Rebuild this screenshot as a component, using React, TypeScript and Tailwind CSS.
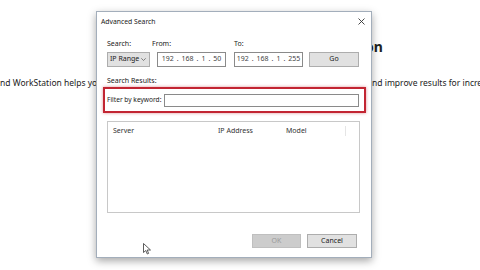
import React from "react";

const ff = { fontFamily: '"Noto Sans", "Open Sans", sans-serif' };

function IpBox({ parts }: { parts: string[] }) {
  return (
    <div className="w-[69px] h-[15px] border border-[#8a8a8a] bg-white flex items-center justify-center gap-[3px] text-[7px] text-[#444]">
      {parts.map((p, i) => (
        <React.Fragment key={i}>
          {i > 0 && <span>.</span>}
          <span>{p}</span>
        </React.Fragment>
      ))}
    </div>
  );
}

export default function App() {
  return (
    <div className="relative w-[480px] h-[270px] bg-white overflow-hidden" style={ff}>
      {/* background page */}
      <div className="pt-[38px] text-[#222]">
        <div className="pl-[365px] text-[14px] font-bold leading-[18px] whitespace-nowrap">on</div>
        <div className="mt-[21px] grid grid-cols-[372px_1fr] text-[8.5px] leading-[12px] whitespace-nowrap overflow-hidden">
          <span>nd WorkStation helps you</span>
          <span>nd improve results for increa</span>
        </div>
      </div>

      {/* dialog */}
      <div className="absolute left-[96px] top-[11px] w-[276px] h-[247px] bg-white border border-[#a3aebb] shadow-[0_3px_8px_rgba(0,0,0,0.35)] text-[#1a1a1a] text-[7px]">
        <div className="h-[19px] flex items-center justify-between pl-[4px] pr-[6px]">
          <span className="leading-[9px] text-[6.8px]">Advanced Search</span>
          <svg width="7" height="7" viewBox="0 0 7 7" className="mt-[-1px]">
            <path d="M0.5 0.5 L6.5 6.5 M6.5 0.5 L0.5 6.5" stroke="#333" strokeWidth="0.9" />
          </svg>
        </div>
        <div className="pl-[10px]">
          <div className="mt-[8px] flex leading-[9px]">
            <span className="w-[45px]">Search:</span>
            <span className="w-[82px]">From:</span>
            <span>To:</span>
          </div>
          <div className="mt-[4px] flex items-center">
            <div className="w-[43px] h-[15px] bg-[#e1e1e1] border border-[#adadad] flex items-center justify-between pl-[2px] pr-[3px]">
              <span>IP Range</span>
              <svg width="5" height="3" viewBox="0 0 5 3">
                <path d="M0.3 0.3 L2.5 2.5 L4.7 0.3" stroke="#555" strokeWidth="0.7" fill="none" />
              </svg>
            </div>
            <div className="ml-[7px]">
              <IpBox parts={["192", "168", "1", "50"]} />
            </div>
            <div className="ml-[8px]">
              <IpBox parts={["192", "168", "1", "255"]} />
            </div>
            <div className="ml-[6px] w-[50px] h-[15px] bg-[#e1e1e1] border border-[#adadad] flex items-center justify-center">
              Go
            </div>
          </div>
          <div className="mt-[9px] leading-[9px]">Search Results:</div>
          <div className="mt-[2px] ml-[-4px] w-[263px] h-[26px] border-2 border-[#c22532] shadow-[0_0_3px_rgba(194,37,50,0.5)] flex items-center pl-[2px]">
            <span className="w-[57px] whitespace-nowrap text-[6.6px]">Filter by keyword:</span>
            <div className="w-[195px] h-[13px] border border-[#8a8a8a] bg-white" />
          </div>
          <div className="mt-[8px] w-[253px] h-[92px] border border-[#c8c8c8] bg-white flex items-start pt-[4px] text-[#333]">
            <span className="pl-[5px] w-[110px]">Server</span>
            <span className="w-[68px]">IP Address</span>
            <span className="w-[60px] h-[10px] border-r border-[#e5e5e5]">Model</span>
          </div>
          <div className="mt-[21px] flex pl-[145px] gap-[6px]">
            <div className="w-[49px] h-[14px] bg-[#cccccc] border border-[#bfbfbf] flex items-center justify-center text-[#9a9a9a]">
              OK
            </div>
            <div className="w-[50px] h-[14px] bg-[#e1e1e1] border border-[#adadad] flex items-center justify-center">
              Cancel
            </div>
          </div>
        </div>
      </div>

      {/* mouse cursor */}
      <svg className="absolute left-[143px] top-[243px]" width="9" height="12" viewBox="0 0 9 12">
        <path d="M0.5 0.5 L0.5 9.5 L2.8 7.5 L4.3 11 L5.6 10.4 L4.2 7 L7.5 7 Z" fill="white" stroke="#333" strokeWidth="0.8" strokeLinejoin="round" />
      </svg>
    </div>
  );
}
